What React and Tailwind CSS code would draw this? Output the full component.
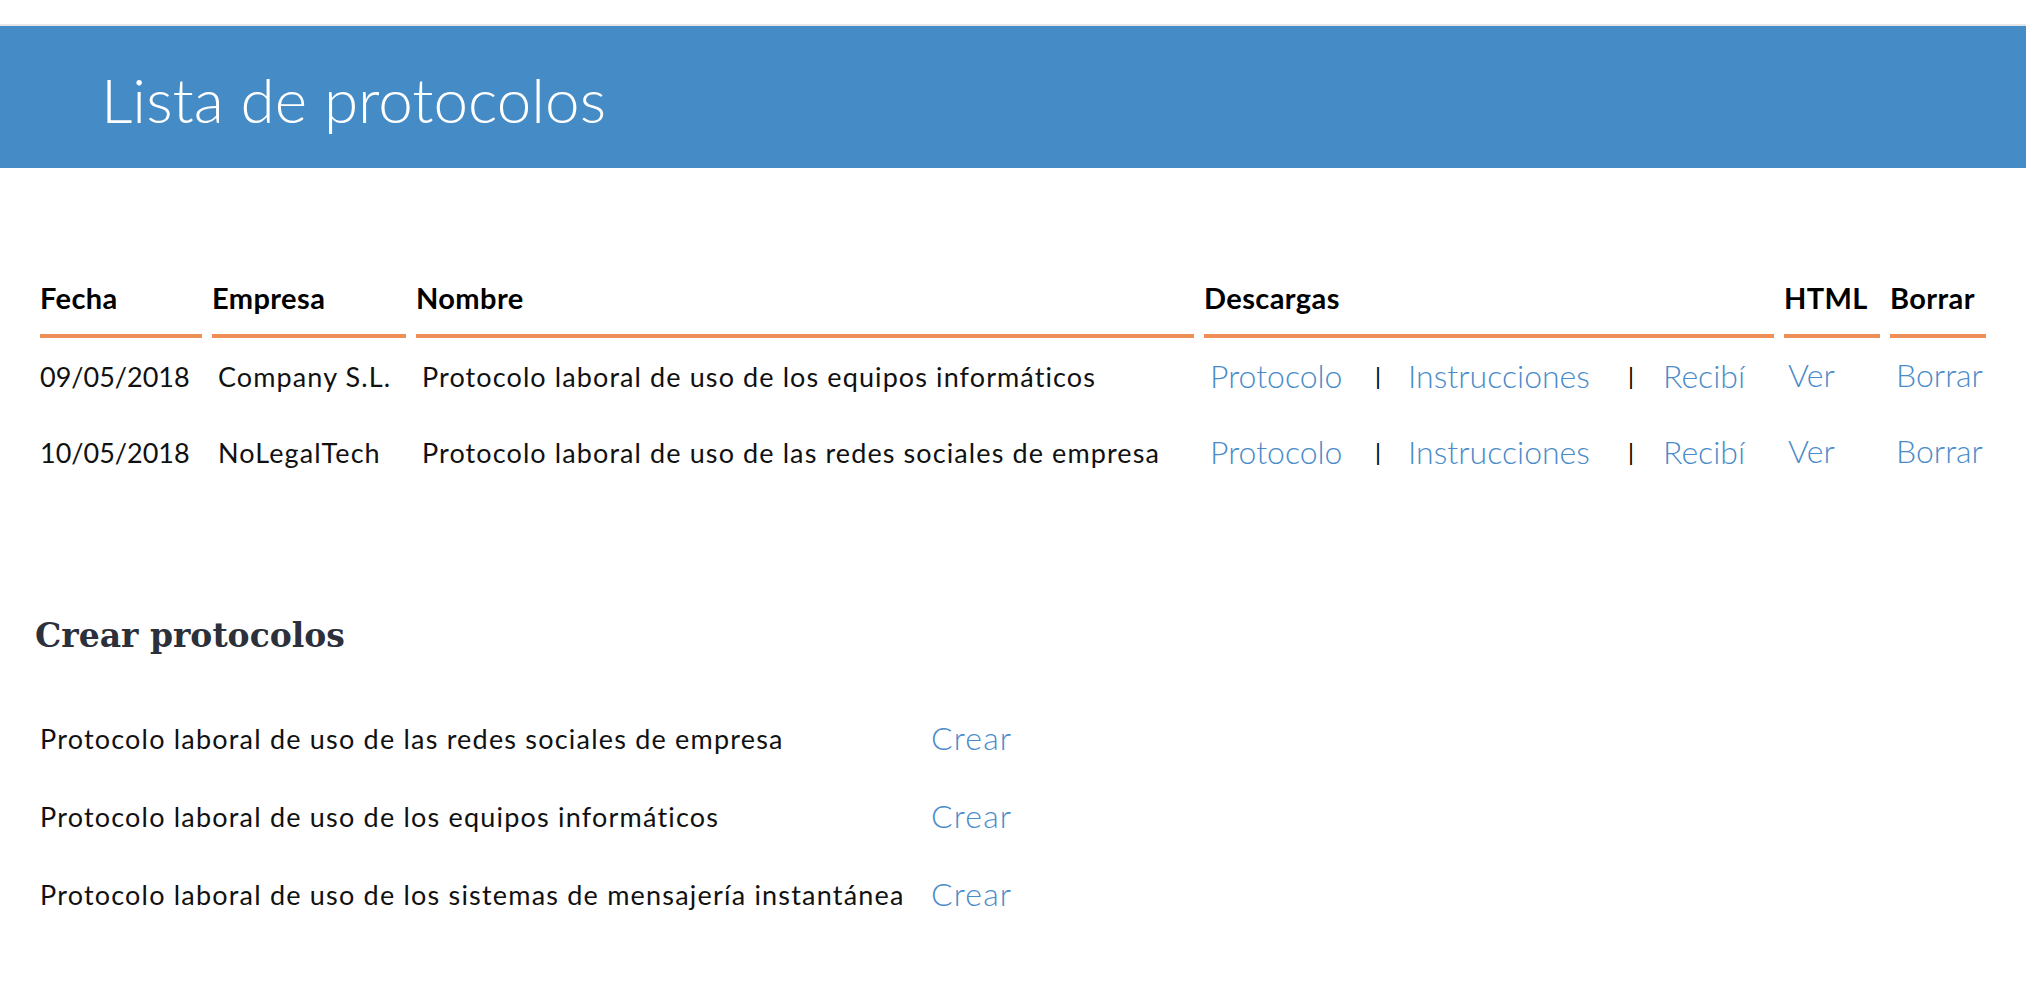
import React from "react";

const rows = [
  { fecha: "09/05/2018", empresa: "Company S.L.", nombre: "Protocolo laboral de uso de los equipos informáticos" },
  { fecha: "10/05/2018", empresa: "NoLegalTech", nombre: "Protocolo laboral de uso de las redes sociales de empresa" },
];

const templates = [
  "Protocolo laboral de uso de las redes sociales de empresa",
  "Protocolo laboral de uso de los equipos informáticos",
  "Protocolo laboral de uso de los sistemas de mensajería instantánea",
];

const cols = "grid grid-cols-[162px_194px_778px_570px_96px_96px] gap-x-[10px]";
const th = "text-[29px] font-bold leading-none tracking-[0.4px] text-black pb-[22px] border-b-4 border-[#ef8f58] whitespace-nowrap";
const td = "text-[27px] leading-none tracking-[1.1px] whitespace-nowrap";
const link = "text-[32px] leading-none text-[#4a8bc9] font-light whitespace-nowrap";

export default function App() {
  return (
    <div className="min-h-screen bg-white font-['Lato',sans-serif] text-[#111]">
      <div className="h-[24px]" />
      <div className="border-t-2 border-[#e6e6e6] bg-[#458bc6] h-[144px] pt-[42px] pl-[101px]">
        <h1 className="text-[62px] font-light leading-none text-white">Lista de protocolos</h1>
      </div>

      <div className="px-[40px]">
        {/* Lista */}
        <div className={`${cols} mt-[115px]`}>
          <div className={th}>Fecha</div>
          <div className={th}>Empresa</div>
          <div className={th}>Nombre</div>
          <div className={th}>Descargas</div>
          <div className={th}>HTML</div>
          <div className={th}>Borrar</div>
        </div>

        {rows.map((r) => (
          <div key={r.fecha} className={`${cols} h-[76px] items-center`}>
            <div className="text-[27px] leading-none whitespace-nowrap">{r.fecha}</div>
            <div className={`${td} pl-[6px]`}>{r.empresa}</div>
            <div className={`${td} pl-[6px]`}>{r.nombre}</div>
            <div className="pl-[6px] flex items-center">
              <a href="#" className={`${link} w-[165px] shrink-0`}>Protocolo</a>
              <span className="w-[33px] shrink-0 text-[24px] leading-none text-black">|</span>
              <a href="#" className={`${link} w-[220px] shrink-0`}>Instrucciones</a>
              <span className="w-[35px] shrink-0 text-[24px] leading-none text-black">|</span>
              <a href="#" className={link}>Recibí</a>
            </div>
            <div className="pl-[4px]">
              <a href="#" className={link}>Ver</a>
            </div>
            <div className="pl-[6px]">
              <a href="#" className={link}>Borrar</a>
            </div>
          </div>
        ))}

        {/* Crear */}
        <h2 className="mt-[129px] text-[33px] leading-none font-bold text-[#2b303b] font-['DejaVu_Serif',serif] -ml-[5px]">
          Crear protocolos
        </h2>

        <div className="mt-[47px]">
          {templates.map((t) => (
            <div key={t} className="grid grid-cols-[891px_auto] h-[78px] items-center">
              <div className="text-[27px] leading-none tracking-[1.2px] whitespace-nowrap">{t}</div>
              <a href="#" className="text-[32px] leading-none tracking-[1.2px] font-light text-[#4a8bc9]">Crear</a>
            </div>
          ))}
        </div>
      </div>
    </div>
  );
}
